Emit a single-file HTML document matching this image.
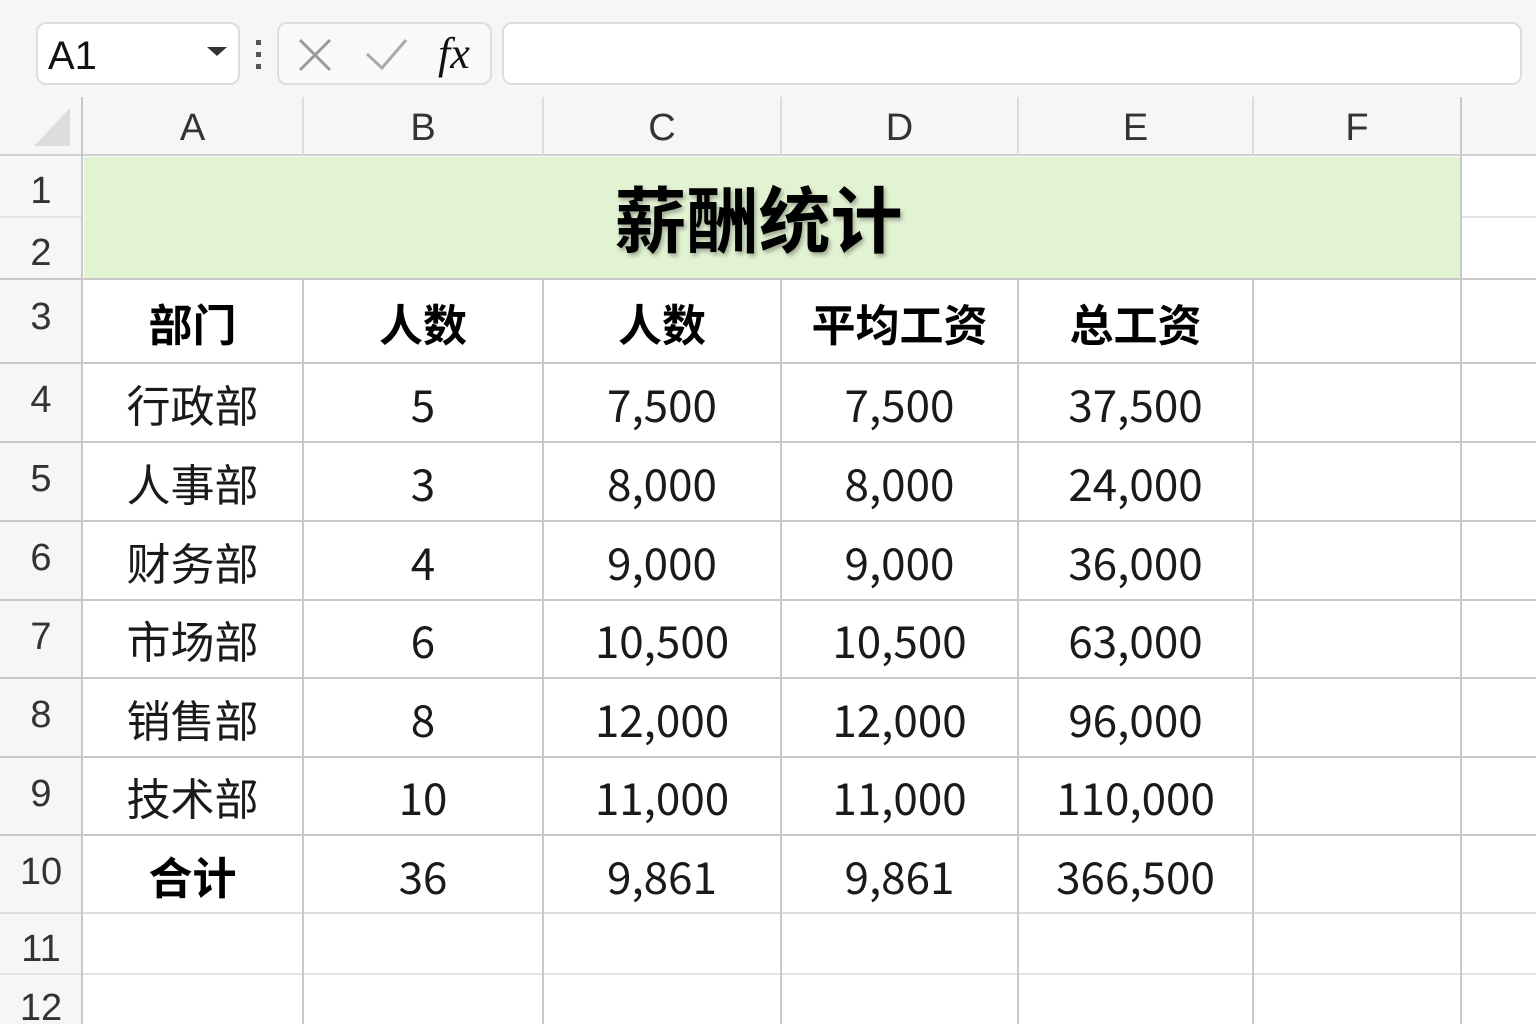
<!DOCTYPE html>
<html><head><meta charset="utf-8"><style>
*{margin:0;padding:0;box-sizing:border-box}
body{width:1536px;height:1024px;overflow:hidden;background:#fff;font-family:"Liberation Sans","Noto Sans CJK SC",sans-serif;position:relative;color:#111}
.a{position:absolute}
.c{position:absolute;display:flex;align-items:center;justify-content:center}
.vl{position:absolute;width:2px;background:#c8c8c8}
.hl{position:absolute;height:2px;background:#c8c8c8}
.num{font-family:"Noto Sans CJK SC","Liberation Sans",sans-serif;font-size:44px;color:#1a1a1a;margin-top:-3px}
.cn{font-family:"Liberation Sans","Noto Sans CJK SC",sans-serif;font-size:44px;color:#1a1a1a;margin-top:-3px}
.b{font-weight:bold;color:#000}
.rh{font-size:38px;color:#333;width:82px;left:0}
.ch{font-size:38px;color:#333;top:99px;height:58px}
</style></head><body>
<div class="a" style="left:0;top:0;width:1536px;height:155px;background:#f6f6f6"></div>
<div class="a" style="left:0;top:155px;width:82px;height:869px;background:#f6f6f6"></div>
<div class="a" style="left:36px;top:22px;width:204px;height:63px;border:2px solid #ddd;border-radius:10px;background:#fff"></div>
<div class="a" style="left:48px;top:34px;font-size:40px;color:#111">A1</div>
<div class="a" style="left:207px;top:47px;width:0;height:0;border-left:10px solid transparent;border-right:10px solid transparent;border-top:9px solid #333"></div>
<div class="a" style="left:256px;top:40px;width:5px;height:5px;background:#555"></div>
<div class="a" style="left:256px;top:52px;width:5px;height:5px;background:#555"></div>
<div class="a" style="left:256px;top:64px;width:5px;height:5px;background:#555"></div>
<div class="a" style="left:277px;top:22px;width:215px;height:63px;border:2px solid #ddd;border-radius:10px;background:#f9f9f9"></div>
<svg class="a" style="left:296px;top:36px" width="40" height="40"><path d="M4 4L34 34M34 4L4 34" stroke="#999" stroke-width="3"/></svg>
<svg class="a" style="left:364px;top:36px" width="46" height="36"><path d="M3 18L18 32L42 4" stroke="#aaa" stroke-width="3" fill="none"/></svg>
<div class="a" style="left:438px;top:28px;font-family:'Liberation Serif',serif;font-style:italic;font-size:44px;color:#111">fx</div>
<div class="a" style="left:502px;top:22px;width:1020px;height:63px;border:2px solid #ddd;border-radius:10px;background:#fff"></div>
<svg class="a" style="left:34px;top:108px" width="36" height="38"><path d="M36 0L36 38L0 38Z" fill="#ddd"/></svg>
<div class="a" style="left:84px;top:157px;width:1377px;height:122px;background:#e2f3d3"></div>
<div class="c ch" style="left:82px;width:221px">A</div>
<div class="c ch" style="left:303px;width:240px">B</div>
<div class="c ch" style="left:543px;width:238px">C</div>
<div class="c ch" style="left:781px;width:237px">D</div>
<div class="c ch" style="left:1018px;width:235px">E</div>
<div class="c ch" style="left:1253px;width:208px">F</div>
<div class="hl" style="left:0;top:154px;width:1536px;background:#d0d0d0"></div>
<div class="hl" style="left:1461px;top:216px;width:75px;background:#e2e2e2"></div>
<div class="hl" style="left:0;top:216px;width:82px;background:#e2e2e2"></div>
<div class="hl" style="left:0;top:278px;width:1536px"></div>
<div class="hl" style="left:0;top:362px;width:1536px"></div>
<div class="hl" style="left:0;top:441px;width:1536px"></div>
<div class="hl" style="left:0;top:520px;width:1536px"></div>
<div class="hl" style="left:0;top:599px;width:1536px"></div>
<div class="hl" style="left:0;top:677px;width:1536px"></div>
<div class="hl" style="left:0;top:756px;width:1536px"></div>
<div class="hl" style="left:0;top:834px;width:1536px"></div>
<div class="hl" style="left:0;top:912px;width:1536px;background:#ddd"></div>
<div class="hl" style="left:0;top:973px;width:1536px;background:#e4e4e4"></div>
<div class="vl" style="left:81px;top:97px;height:927px"></div>
<div class="vl" style="left:302px;top:97px;height:58px;background:#ddd"></div>
<div class="vl" style="left:542px;top:97px;height:58px;background:#ddd"></div>
<div class="vl" style="left:780px;top:97px;height:58px;background:#ddd"></div>
<div class="vl" style="left:1017px;top:97px;height:58px;background:#ddd"></div>
<div class="vl" style="left:1252px;top:97px;height:58px;background:#ddd"></div>
<div class="vl" style="left:1460px;top:97px;height:927px"></div>
<div class="vl" style="left:302px;top:279px;height:745px"></div>
<div class="vl" style="left:542px;top:279px;height:745px"></div>
<div class="vl" style="left:780px;top:279px;height:745px"></div>
<div class="vl" style="left:1017px;top:279px;height:745px"></div>
<div class="vl" style="left:1252px;top:279px;height:745px"></div>
<div class="c rh" style="top:160px;height:62px">1</div>
<div class="c rh" style="top:222px;height:62px">2</div>
<div class="c rh" style="top:282px;height:70px">3</div>
<div class="c rh" style="top:361px;height:79px">4</div>
<div class="c rh" style="top:440px;height:79px">5</div>
<div class="c rh" style="top:519px;height:79px">6</div>
<div class="c rh" style="top:598px;height:78px">7</div>
<div class="c rh" style="top:676px;height:79px">8</div>
<div class="c rh" style="top:755px;height:78px">9</div>
<div class="c rh" style="top:833px;height:78px">10</div>
<div class="c rh" style="top:918px;height:62px">11</div>
<div class="c rh" style="top:980px;height:56px">12</div>
<div class="c cn b" style="left:70px;top:157px;width:1377px;height:122px;font-size:72px;text-shadow:2px 3px 4px rgba(0,0,0,.3)">薪酬统计</div>
<div class="c cn b" style="left:82px;top:285px;width:221px;height:80px">部门</div>
<div class="c cn b" style="left:303px;top:285px;width:240px;height:80px">人数</div>
<div class="c cn b" style="left:543px;top:285px;width:238px;height:80px">人数</div>
<div class="c cn b" style="left:781px;top:285px;width:237px;height:80px">平均工资</div>
<div class="c cn b" style="left:1018px;top:285px;width:235px;height:80px">总工资</div>

<div class="c cn" style="left:82px;top:366px;width:221px;height:79px">行政部</div>
<div class="c num" style="left:303px;top:366px;width:240px;height:79px">5</div>
<div class="c num" style="left:543px;top:366px;width:238px;height:79px">7,500</div>
<div class="c num" style="left:781px;top:366px;width:237px;height:79px">7,500</div>
<div class="c num" style="left:1018px;top:366px;width:235px;height:79px">37,500</div>

<div class="c cn" style="left:82px;top:445px;width:221px;height:79px">人事部</div>
<div class="c num" style="left:303px;top:445px;width:240px;height:79px">3</div>
<div class="c num" style="left:543px;top:445px;width:238px;height:79px">8,000</div>
<div class="c num" style="left:781px;top:445px;width:237px;height:79px">8,000</div>
<div class="c num" style="left:1018px;top:445px;width:235px;height:79px">24,000</div>

<div class="c cn" style="left:82px;top:524px;width:221px;height:79px">财务部</div>
<div class="c num" style="left:303px;top:524px;width:240px;height:79px">4</div>
<div class="c num" style="left:543px;top:524px;width:238px;height:79px">9,000</div>
<div class="c num" style="left:781px;top:524px;width:237px;height:79px">9,000</div>
<div class="c num" style="left:1018px;top:524px;width:235px;height:79px">36,000</div>

<div class="c cn" style="left:82px;top:602px;width:221px;height:79px">市场部</div>
<div class="c num" style="left:303px;top:602px;width:240px;height:79px">6</div>
<div class="c num" style="left:543px;top:602px;width:238px;height:79px">10,500</div>
<div class="c num" style="left:781px;top:602px;width:237px;height:79px">10,500</div>
<div class="c num" style="left:1018px;top:602px;width:235px;height:79px">63,000</div>

<div class="c cn" style="left:82px;top:681px;width:221px;height:79px">销售部</div>
<div class="c num" style="left:303px;top:681px;width:240px;height:79px">8</div>
<div class="c num" style="left:543px;top:681px;width:238px;height:79px">12,000</div>
<div class="c num" style="left:781px;top:681px;width:237px;height:79px">12,000</div>
<div class="c num" style="left:1018px;top:681px;width:235px;height:79px">96,000</div>

<div class="c cn" style="left:82px;top:759px;width:221px;height:79px">技术部</div>
<div class="c num" style="left:303px;top:759px;width:240px;height:79px">10</div>
<div class="c num" style="left:543px;top:759px;width:238px;height:79px">11,000</div>
<div class="c num" style="left:781px;top:759px;width:237px;height:79px">11,000</div>
<div class="c num" style="left:1018px;top:759px;width:235px;height:79px">110,000</div>

<div class="c cn b" style="left:82px;top:838px;width:221px;height:79px">合计</div>
<div class="c num" style="left:303px;top:838px;width:240px;height:79px">36</div>
<div class="c num" style="left:543px;top:838px;width:238px;height:79px">9,861</div>
<div class="c num" style="left:781px;top:838px;width:237px;height:79px">9,861</div>
<div class="c num" style="left:1018px;top:838px;width:235px;height:79px">366,500</div>
</body></html>
